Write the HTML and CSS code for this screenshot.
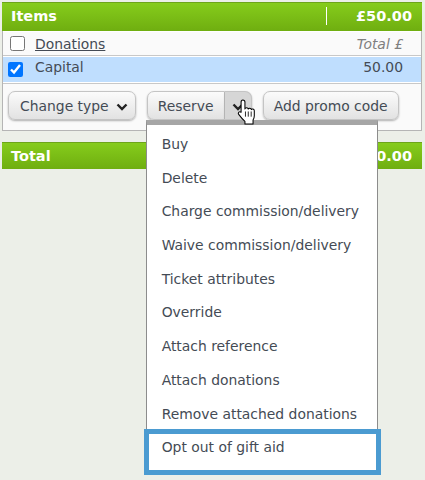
FILE: index.html
```html
<!DOCTYPE html>
<html lang="en">
<head>
    <meta charset="UTF-8">
    <title>Items</title>
    <link rel="stylesheet" href="styles.css">
</head>
<body>
    <div class="page">
        <div class="bar bar-top">
            <span class="bar-title">Items</span>
            <span class="bar-total">£50.00</span>
        </div>
        <div class="panel">
            <div class="row">
                <input type="checkbox" class="check">
                <a class="row-name" href="#">Donations</a>
                <span class="row-value muted">Total £</span>
            </div>
            <div class="row selected">
                <input type="checkbox" class="check check-on" checked>
                <span class="row-name">Capital</span>
                <span class="row-value">50.00</span>
            </div>
            <div class="actions">
                <button class="btn btn-type">Change type<svg class="chevron" viewBox="0 0 12 8"><path d="M1.5 1.5 6 6l4.500-4.500"/></svg></button>
                <div class="split">
                    <button class="btn btn-main">Reserve</button>
                    <button class="btn btn-caret">
                        <svg class="chevron" viewBox="0 0 12 8"><path d="M1.5 1.5 6 6l4.500-4.500"/></svg>
                    </button>
                    <div class="menu">
                        <a class="menu-item">Buy</a>
                        <a class="menu-item">Delete</a>
                        <a class="menu-item">Charge commission/delivery</a>
                        <a class="menu-item">Waive commission/delivery</a>
                        <a class="menu-item">Ticket attributes</a>
                        <a class="menu-item">Override</a>
                        <a class="menu-item">Attach reference</a>
                        <a class="menu-item">Attach donations</a>
                        <a class="menu-item">Remove attached donations</a>
                        <a class="menu-item">Opt out of gift aid</a>
                        <div class="callout"></div>
                    </div>
                    <svg class="hand" viewBox="0 0 18 25">
                        <path d="M5.500 1C6.700 1 7.500 1.900 7.500 3v6.500c.4-1.500 3-1.500 3.200.2.400-1.300 2.800-1.200 3 .5.500-1 2.800-.8 2.800 1V16c0 2-.6 3.200-1.200 4.300V24H7.500v-2.500C5.800 20 3.500 17.500 1.500 14.800.3 13.200 2.300 11.300 3.800 12.800V3c0-1.100.6-2 1.700-2Z"/>
                        <path class="hand-line" d="M8 12v5M10.700 12v5M13.500 12v5"/>
                    </svg>
                </div>
                <button class="btn">Add promo code</button>
            </div>
        </div>
        <div class="bar bar-bottom">
            <span class="bar-title">Total</span>
            <span class="bar-total">£50.00</span>
        </div>
    </div>
</body>
</html>
```

FILE: styles.css
```css
* {
    box-sizing: border-box;
}
html, body {
    height: 100%;
}
body {
    margin: 0;
    background: #ecefe8;
    font-family: "DejaVu Sans", Verdana, sans-serif;
    font-size: 13.9px;
    color: #444b55;
    overflow: hidden;
}
.page {
    padding: 2px 3px 0 2px;
}
.bar {
    display: flex;
    align-items: center;
    height: 29px;
    padding: 0 10px 0 9px;
    background: linear-gradient(#86cc1c, #6fae10);
    border-top: 1px solid #6da51a;
    color: #fff;
    font-weight: bold;
    font-size: 14.5px;
}
.bar-top {
    padding-bottom: 3px;
}
.bar-title {
    flex: 1;
}
.bar-total {
    border-left: 1px solid #fff;
    width: 86px;
    line-height: 18px;
    text-align: right;
}
.bar-bottom {
    height: 27px;
    margin-top: 11px;
}
.bar-bottom .bar-total {
    border-left: 0;
}
.panel {
    background: #fafafa;
    border: 1px solid #b5b5b5;
    border-top: 0;
}
.row {
    display: flex;
    align-items: center;
    height: 25px;
    padding: 0 18px 0 7px;
    border-top: 1px solid #fff;
    border-bottom: 1px solid #c8c8c8;
}
.row.selected {
    height: 27px;
    background: #bfdefe;
    border-bottom: 1px solid #fff;
    padding: 0 18px 5px 5px;
}
.check {
    width: 15px;
    height: 15px;
    margin: 0 10px 0 0;
}
.check-on {
    margin: 5px 12px 0 0;
}
.row-name {
    flex: 1;
    color: #444b55;
}
.row-value {
    text-align: right;
}
.muted {
    font-style: italic;
    color: #7f7f7f;
}
.actions {
    display: flex;
    gap: 11px;
    height: 47px;
    padding: 7px 0 0 5px;
    border-top: 1px solid #c8c8c8;
}
.btn {
    height: 29px;
    padding: 0 10px;
    border: 1px solid #c4c4c4;
    border-radius: 7px;
    background: linear-gradient(#fbfbfb, #e2e2e2);
    box-shadow: 0 1px 2px rgba(0,0,0,0.3);
    font: inherit;
    color: inherit;
    white-space: nowrap;
}
.btn-type {
    padding: 0 7px 0 11px;
}
.chevron {
    width: 12px;
    height: 8px;
    margin-left: 7px;
    fill: none;
    stroke: #222;
    stroke-width: 2.4;
}
.split {
    position: relative;
    display: flex;
}
.btn-main {
    width: 78px;
    padding: 0;
    border-radius: 7px 0 0 7px;
}
.btn-caret {
    width: 27px;
    padding: 0;
    border-left: 0;
    border-radius: 0 7px 7px 0;
    background: #d6d6d6;
}
.btn-caret .chevron {
    margin-left: 0;
}
.menu {
    position: absolute;
    top: 29px;
    left: -1px;
    width: 232px;
    height: 355px;
    z-index: 2;
    background: #fff;
    border: 1px solid #8c8c8c;
    border-top: 5px solid #a6a6a6;
    border-radius: 0 0 3px 3px;
    padding-top: 3px;
}
.menu-item {
    display: block;
    height: 33.7px;
    line-height: 33.7px;
    padding-left: 15px;
    white-space: nowrap;
}
.callout {
    position: absolute;
    left: -3px;
    right: -4px;
    bottom: -1px;
    height: 46px;
    border: 5px solid #4b9bd1;
}
.hand {
    position: absolute;
    top: 8px;
    left: 90px;
    width: 19px;
    height: 26px;
    z-index: 3;
    fill: #fff;
    stroke: #000;
    stroke-width: 1;
    stroke-linejoin: round;
}
.hand-line {
    fill: none;
    stroke-width: 0.8;
}
```
